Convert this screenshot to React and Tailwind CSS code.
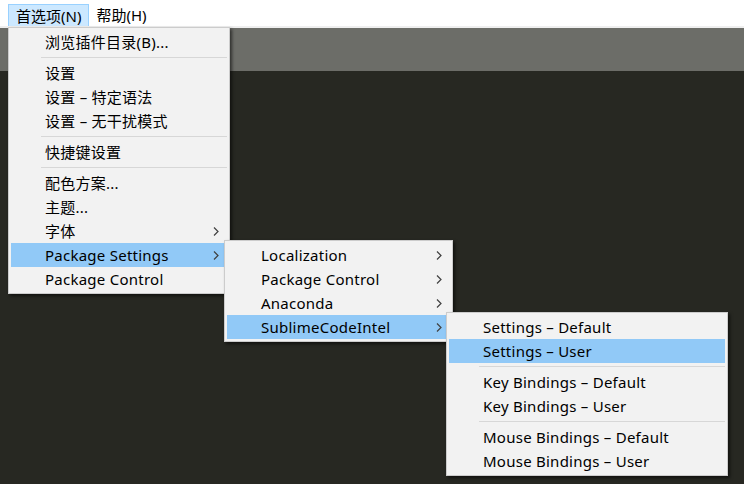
import React from 'react';

const FONT = { fontFamily: '"Noto Sans", "Noto Sans CJK SC", sans-serif' };

function Chevron() {
    return (
        <svg width="6" height="9" viewBox="0 0 6 9" className="absolute right-[8px] top-[8px]">
            <polyline points="1,0.5 5,4.5 1,8.5" fill="none" stroke="#404040" strokeWidth="1.2" />
        </svg>
    );
}

function Item({ label, active, sub }) {
    return (
        <div className={`relative h-[24px] flex items-center pl-[34px] pr-[30px] whitespace-nowrap text-[15px] tracking-[0.25px] text-black ${active ? 'bg-[#91c9f7]' : ''}`}>
            {label}
            {sub && <Chevron />}
        </div>
    );
}

function Sep() {
    return (
        <div className="h-[7px] pt-[3px] pl-[30px]">
            <div className="h-px bg-[#d7d7d7]" />
        </div>
    );
}

function Menu({ className, children }) {
    return (
        <div className={`absolute bg-[#f2f2f2] border border-[#cccccc] p-[2px] shadow-[2px_2px_3px_rgba(0,0,0,0.55)] ${className}`}>
            {children}
        </div>
    );
}

export default function App() {
    return (
        <div className="relative w-[744px] h-[484px] overflow-hidden flex flex-col bg-[#272822]" style={FONT}>
            {/* menu bar */}
            <div className="h-[26px] bg-white flex items-start pl-[8px] pt-[4px] text-[15px] text-black">
                <div className="h-[23px] px-[7px] flex items-center bg-[#cce8ff] border border-[#99d1ff] border-b-0">首选项(N)</div>
                <div className="h-[23px] px-[7px] flex items-center">帮助(H)</div>
            </div>
            <div className="h-[2px] bg-[#efefef]" />
            {/* tab strip */}
            <div className="h-[43px] bg-[#6c6d68]" />
            <div className="flex-1 bg-[#272822]" />

            <Menu className="left-[8px] top-[27px] w-[222px]">
                <Item label="浏览插件目录(B)..." />
                <Sep />
                <Item label="设置" />
                <Item label="设置 – 特定语法" />
                <Item label="设置 – 无干扰模式" />
                <Sep />
                <Item label="快捷键设置" />
                <Sep />
                <Item label="配色方案..." />
                <Item label="主题..." />
                <Item label="字体" sub />
                <Item label="Package Settings" active sub />
                <Item label="Package Control" />
            </Menu>

            <Menu className="left-[224px] top-[240px] w-[229px]">
                <Item label="Localization" sub />
                <Item label="Package Control" sub />
                <Item label="Anaconda" sub />
                <Item label="SublimeCodeIntel" active sub />
            </Menu>

            <Menu className="left-[446px] top-[312px] w-[282px]">
                <Item label="Settings – Default" />
                <Item label="Settings – User" active />
                <Sep />
                <Item label="Key Bindings – Default" />
                <Item label="Key Bindings – User" />
                <Sep />
                <Item label="Mouse Bindings – Default" />
                <Item label="Mouse Bindings – User" />
            </Menu>
        </div>
    );
}
